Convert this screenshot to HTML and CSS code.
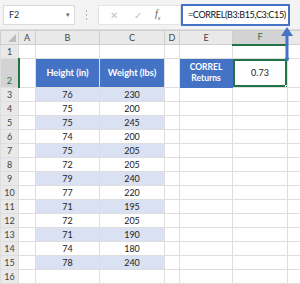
FILE: index.html
```html
<!DOCTYPE html>
<html lang="en">
<head>
    <meta charset="UTF-8">
    <title>CORREL Example</title>
    <link rel="stylesheet" href="styles.css">
</head>
<body>
<div class="screen">

    <!-- Formula bar -->
    <div class="toolbar">
        <div class="namebox"><span>F2</span><span class="caret">&#9662;</span></div>
        <div class="grip"><i></i><i></i><i></i></div>
        <div class="fbtns">
            <span class="btn">&#10005;</span>
            <span class="btn">&#10003;</span>
            <span class="fx">f<sub>x</sub></span>
        </div>
        <div class="formula">=CORREL(B3:B15,C3:C15)</div>
    </div>

    <!-- Sheet -->
    <table class="sheet">
        <colgroup>
            <col class="c-hdr"><col class="c-a"><col class="c-b"><col class="c-c">
            <col class="c-d"><col class="c-e"><col class="c-f"><col class="c-g">
        </colgroup>
        <tr class="colhead">
            <th class="corner"><span class="tri"></span></th>
            <th>A</th><th>B</th><th>C</th><th>D</th><th>E</th><th class="sel">F</th><th></th>
        </tr>
        <tr>
            <th class="rh">1</th><td></td><td></td><td></td><td></td><td></td><td></td><td></td>
        </tr>
        <tr class="tall">
            <th class="rh sel">2</th><td></td>
            <td class="th-blue">Height (in)</td><td class="th-blue">Weight (lbs)</td>
            <td></td>
            <td class="th-blue label">CORREL<br>Returns</td>
            <td class="active">0.73</td><td></td>
        </tr>
        <tr class="band"><th class="rh">3</th><td></td><td class="d">76</td><td class="d">230</td><td></td><td></td><td></td><td></td></tr>
        <tr><th class="rh">4</th><td></td><td class="d">75</td><td class="d">200</td><td></td><td></td><td></td><td></td></tr>
        <tr class="band"><th class="rh">5</th><td></td><td class="d">75</td><td class="d">245</td><td></td><td></td><td></td><td></td></tr>
        <tr><th class="rh">6</th><td></td><td class="d">74</td><td class="d">200</td><td></td><td></td><td></td><td></td></tr>
        <tr class="band"><th class="rh">7</th><td></td><td class="d">75</td><td class="d">205</td><td></td><td></td><td></td><td></td></tr>
        <tr><th class="rh">8</th><td></td><td class="d">72</td><td class="d">205</td><td></td><td></td><td></td><td></td></tr>
        <tr class="band"><th class="rh">9</th><td></td><td class="d">79</td><td class="d">240</td><td></td><td></td><td></td><td></td></tr>
        <tr><th class="rh">10</th><td></td><td class="d">77</td><td class="d">220</td><td></td><td></td><td></td><td></td></tr>
        <tr class="band"><th class="rh">11</th><td></td><td class="d">71</td><td class="d">195</td><td></td><td></td><td></td><td></td></tr>
        <tr><th class="rh">12</th><td></td><td class="d">72</td><td class="d">205</td><td></td><td></td><td></td><td></td></tr>
        <tr class="band"><th class="rh">13</th><td></td><td class="d">71</td><td class="d">190</td><td></td><td></td><td></td><td></td></tr>
        <tr><th class="rh">14</th><td></td><td class="d">74</td><td class="d">180</td><td></td><td></td><td></td><td></td></tr>
        <tr class="band"><th class="rh">15</th><td></td><td class="d">78</td><td class="d">240</td><td></td><td></td><td></td><td></td></tr>
        <tr><th class="rh">16</th><td></td><td></td><td></td><td></td><td></td><td></td><td></td></tr>
    </table>

    <!-- Arrow from formula to cell -->
    <svg class="arrow" width="14" height="36" viewBox="0 0 14 36">
        <line x1="7" y1="8" x2="7" y2="34" stroke="#4472c4" stroke-width="3"/>
        <polygon points="1,11 7,2 13,11" fill="#4472c4"/>
        <circle cx="7" cy="34" r="2" fill="#4472c4"/>
    </svg>

</div>
</body>
</html>
```

FILE: styles.css
```css
body {
    margin: 0;
    background-color: #fff;
    font-family: Lato, "Liberation Sans", sans-serif;
    overflow: hidden;
}

.screen {
    position: relative;
    width: 300px;
    height: 284px;
    overflow: hidden;
}

/* Formula bar */
.toolbar {
    display: flex;
    align-items: center;
    height: 30px;
    background-color: #f3f3f3;
    border-bottom: 1px solid #dcdcdc;
    box-sizing: border-box;
}

.namebox {
    display: flex;
    justify-content: space-between;
    align-items: center;
    width: 72px;
    height: 20px;
    margin-left: 3px;
    padding: 0 4px 0 5px;
    box-sizing: border-box;
    background-color: #fff;
    border: 1px solid #dadada;
    font-size: 9px;
    color: #333;
}

.namebox .caret {
    font-size: 7px;
    color: #666;
}

.grip {
    display: flex;
    flex-direction: column;
    align-items: center;
    gap: 2px;
    width: 23px;
}

.grip i {
    width: 1px;
    height: 2px;
    background-color: #b5b5b5;
}

.fbtns {
    display: flex;
    align-items: center;
    width: 83px;
    height: 20px;
    background-color: #fff;
    border: 1px solid #e4e4e4;
    box-sizing: border-box;
}

.fbtns .btn {
    width: 24px;
    text-align: center;
    font-size: 10px;
    color: #c4c4c4;
}

.fbtns .btn:first-child {
    margin-left: 3px;
}

.fbtns .fx {
    margin-left: 5px;
    font-family: "Liberation Serif", serif;
    font-style: italic;
    font-size: 10px;
    color: #555;
}

.fx sub {
    font-size: 6px;
}

.formula {
    display: flex;
    align-items: center;
    width: 109px;
    height: 22px;
    padding-left: 5px;
    box-sizing: border-box;
    background-color: #fff;
    border: 2px solid #4472c4;
    font-size: 9px;
    letter-spacing: -0.35px;
    color: #111;
    white-space: nowrap;
    overflow: hidden;
}

/* Sheet grid */
.sheet {
    table-layout: fixed;
    border-collapse: collapse;
    width: 300px;
    font-size: 9px;
    color: #222;
}

.c-hdr { width: 18px; }
.c-a { width: 17px; }
.c-b { width: 64px; }
.c-c { width: 65px; }
.c-d { width: 15px; }
.c-e { width: 53px; }
.c-f { width: 55px; }
.c-g { width: 13px; }

.sheet tr {
    height: 14px;
}

.sheet tr.tall {
    height: 29px;
}

.sheet td,
.sheet th {
    padding: 0;
    border: 1px solid #dedede;
    text-align: center;
    line-height: 12px;
    overflow: hidden;
    white-space: nowrap;
}

.colhead th {
    background-color: #e9e9e9;
    border-color: #cfcfcf;
    font-weight: normal;
    color: #444;
}

.colhead th.sel {
    background-color: #d3d3d3;
    border-bottom: 2px solid #217346;
    color: #217346;
}

.corner {
    position: relative;
}

.corner .tri {
    position: absolute;
    right: 2px;
    bottom: 2px;
    width: 0;
    height: 0;
    border-left: 8px solid transparent;
    border-bottom: 8px solid #bdbdbd;
}

.rh {
    background-color: #e9e9e9;
    border-color: #cfcfcf;
    font-weight: normal;
    color: #444;
    vertical-align: bottom;
}

.rh.sel {
    background-color: #d3d3d3;
    border-right: 2px solid #217346;
    color: #217346;
}

/* Data table */
.th-blue {
    background-color: #4472c4;
    color: #fff;
    font-weight: bold;
    font-size: 9.2px;
    border-color: #4472c4 #8ea9db #4472c4 #4472c4;
}

.th-blue.label {
    font-size: 8.5px;
    line-height: 11px;
    border-color: #4472c4;
}

.d {
    border-color: #a9bfe6;
}

.band .d {
    background-color: #d9e1f2;
}

.active {
    position: relative;
    box-shadow: inset 0 0 0 2px #217346;
    font-size: 9px;
}

.active::after {
    content: "";
    position: absolute;
    right: -3px;
    bottom: -3px;
    width: 5px;
    height: 5px;
    background-color: #217346;
    border: 1px solid #fff;
    box-sizing: border-box;
}

.arrow {
    position: absolute;
    left: 280px;
    top: 25px;
}
```
